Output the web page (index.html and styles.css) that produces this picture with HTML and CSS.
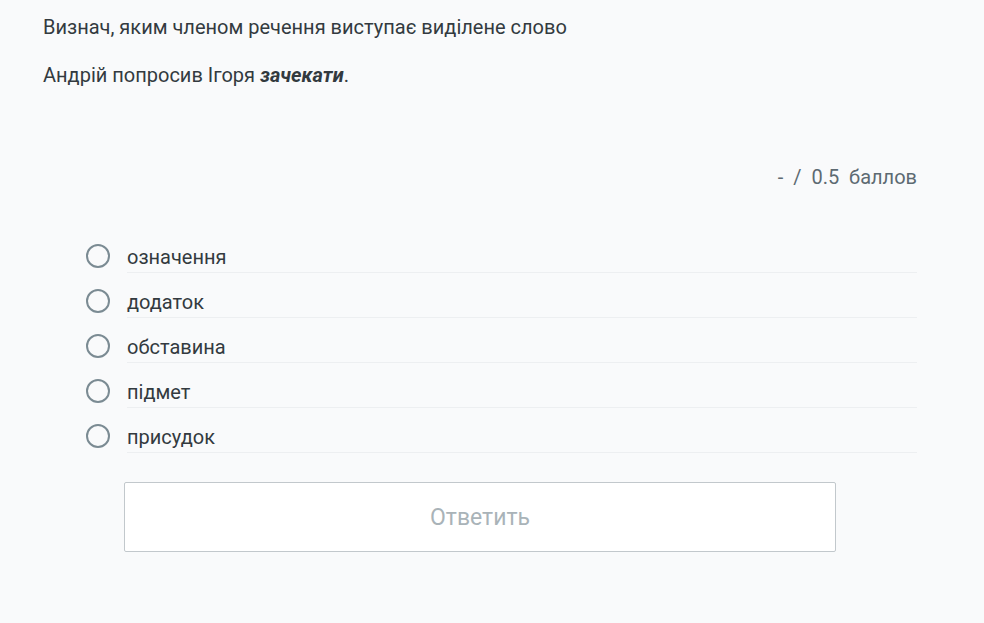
FILE: index.html
```html
<!DOCTYPE html>
<html lang="uk">
<head>
<meta charset="utf-8">
<link rel="stylesheet" href="styles.css">
</head>
<body>
<div class="page">
  <p class="question">Визнач, яким членом речення виступає виділене слово</p>
  <p class="sentence">Андрій попросив Ігоря <b><i>зачекати</i></b>.</p>
  <div class="points">-&nbsp; /&nbsp; 0.5&nbsp; баллов</div>
  <ul class="options">
    <li class="option"><span class="radio"></span><span class="label">означення</span></li>
    <li class="option"><span class="radio"></span><span class="label">додаток</span></li>
    <li class="option"><span class="radio"></span><span class="label">обставина</span></li>
    <li class="option"><span class="radio"></span><span class="label">підмет</span></li>
    <li class="option"><span class="radio"></span><span class="label">присудок</span></li>
  </ul>
  <div class="actions"><button class="submit" type="button">Ответить</button></div>
</div>
</body>
</html>
```

FILE: styles.css
```css
html, body {
  margin: 0;
  padding: 0;
  background: #f9fafb;
}
body {
  font-family: Roboto, "Noto Sans", sans-serif;
  color: #333a3f;
}
.page {
  padding: 14px 67px 0 43px;
}
.question {
  margin: 0;
  font-size: 20px;
  line-height: 26px;
}
.sentence {
  margin: 22px 0 0;
  font-size: 20px;
  line-height: 26px;
}
.sentence b {
  font-weight: 700;
}
.points {
  margin-top: 76px;
  text-align: right;
  font-size: 20px;
  line-height: 26px;
  color: #5d6a72;
}
.options {
  list-style: none;
  margin: 38px 0 0 43px;
  padding: 0;
}
.option {
  display: flex;
  align-items: flex-start;
  height: 45px;
}
.radio {
  flex: none;
  width: 20px;
  height: 20px;
  border: 2.5px solid #7b8b93;
  border-radius: 50%;
  margin: 16px 17px 0 0;
}
.label {
  flex: 1;
  padding-top: 14px;
  height: 30px;
  line-height: 30px;
  font-size: 20px;
  border-bottom: 1px solid #edeff1;
}
.actions {
  padding: 29px 0 0 81px;
}
.submit {
  display: block;
  width: 712px;
  height: 70px;
  background: #ffffff;
  border: 1px solid #c2c8cc;
  border-radius: 2px;
  font-family: Roboto, "Noto Sans", sans-serif;
  font-size: 23px;
  color: #a9b3b8;
}
```
